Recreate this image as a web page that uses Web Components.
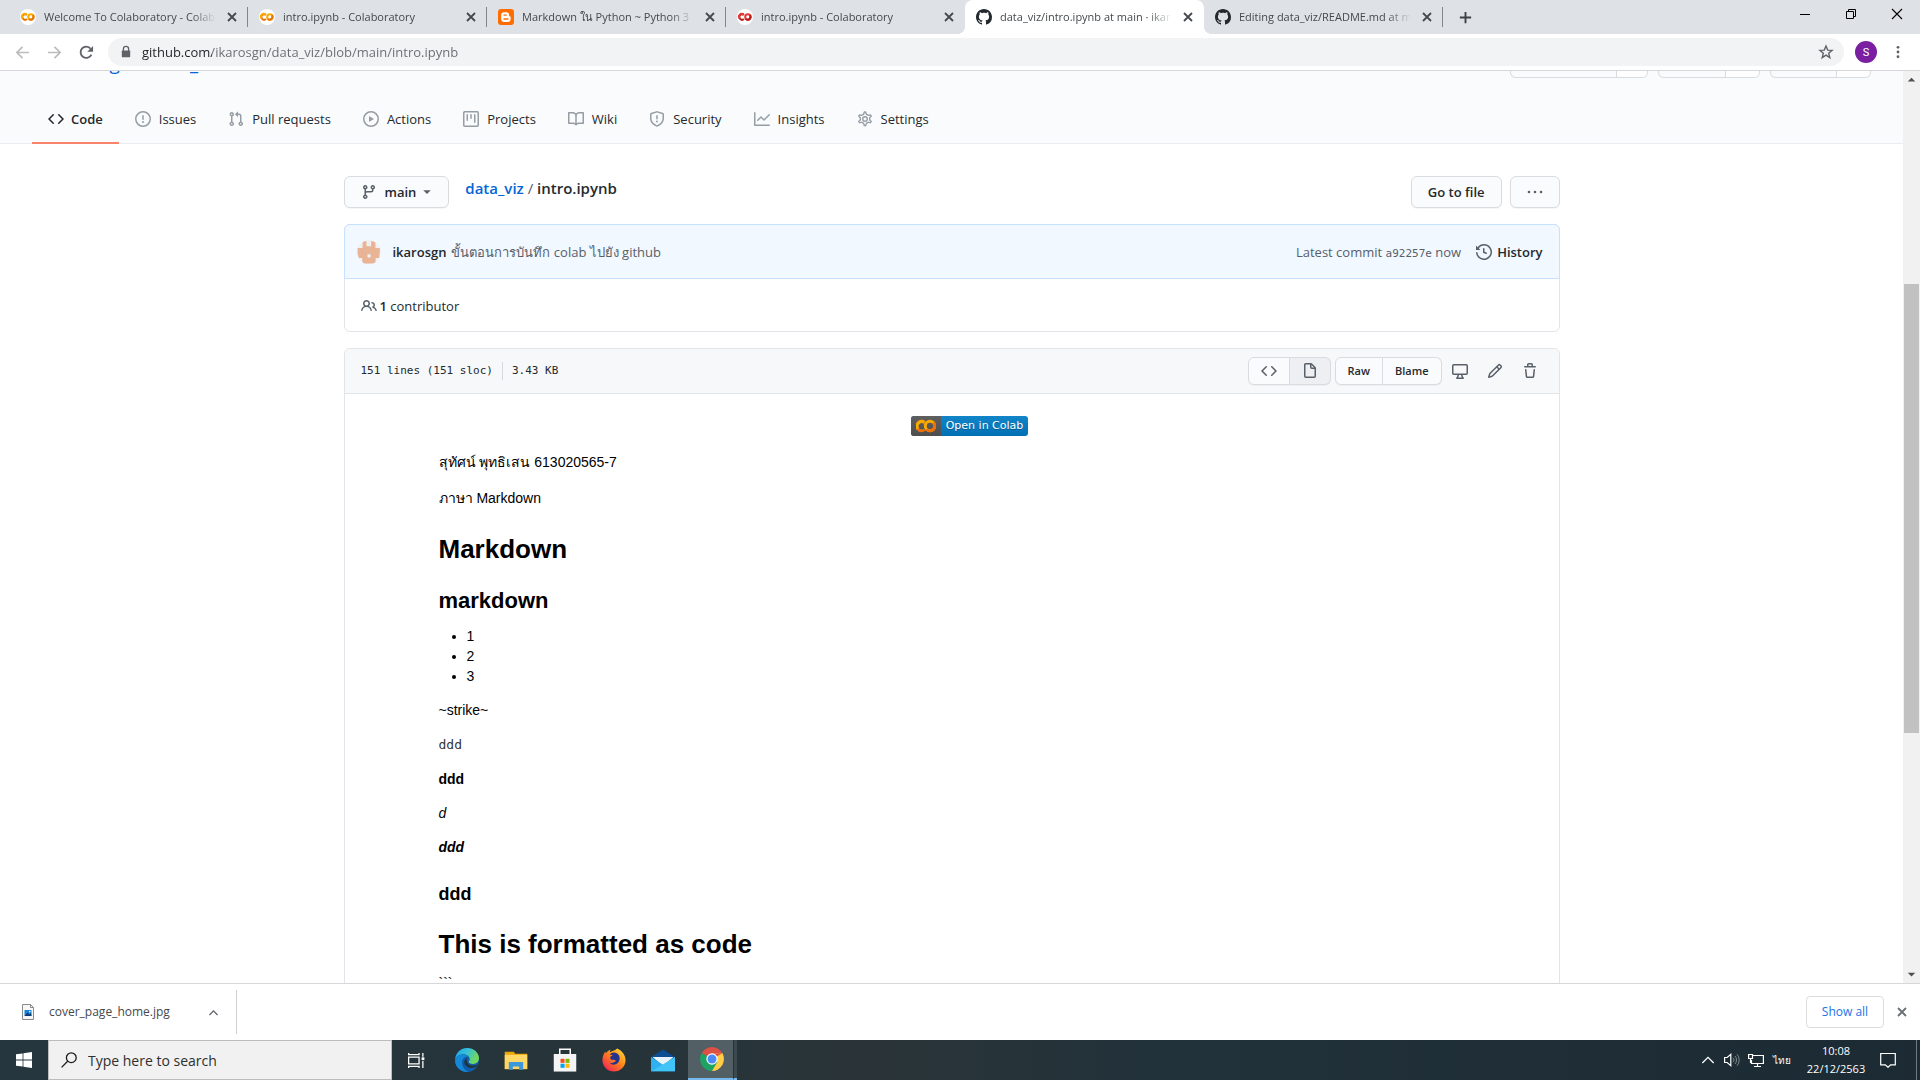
<!DOCTYPE html>
<html lang="en">
<head>
<meta charset="utf-8">
<title>data_viz/intro.ipynb at main · ikarosgn/data_viz</title>
<style>
  html, body { margin: 0; height: 100%; }
  body {
    --ui: "Open Sans", "Noto Sans", sans-serif;
    --mono: "DejaVu Sans Mono", "Liberation Mono", monospace;
    --text: #24292e;
    --muted: #586069;
    --line: #e1e4e8;
    font-family: var(--ui);
    font-size: 13px;
    line-height: 20px;
    color: var(--text);
    background: #fff;
    overflow: hidden;
  }
</style>
</head>
<body>
<desktop-screen></desktop-screen>

<script>
const define = (name, html, setup) => {
  const template = document.createElement('template');
  template.innerHTML = '<style>*{box-sizing:border-box}button{font:inherit;color:inherit;margin:0;padding:0;border:0;background:none;display:inline-flex;align-items:center;justify-content:center}a{color:inherit;text-decoration:none}</style>' + html;
  customElements.define(name, class extends HTMLElement {
    constructor() {
      super();
      this.attachShadow({ mode: 'open' }).append(template.content.cloneNode(true));
    }
    connectedCallback() { if (setup) setup(this, this.shadowRoot); }
  });
};

const COLAB = (a, b) => `<circle cx="8" cy="8" r="8" fill="#fff"/><g fill="none" stroke-width="2"><path d="M6.9 6a2.7 2.7 0 1 0 0 4" stroke="${b}"/><circle cx="10.9" cy="8" r="2.7" stroke="${a}"/><path d="M6.6 5.6a2.7 2.7 0 0 0-3.8 3.9" stroke="${a}"/><path d="M9 9.9A2.7 2.7 0 0 0 12.9 6.2" stroke="${b}"/></g>`;

const ICONS = {
  code: '<path d="M4.72 3.22a.75.75 0 011.06 1.06L2.06 8l3.72 3.72a.75.75 0 11-1.06 1.06L.47 8.53a.75.75 0 010-1.06l4.25-4.25zm6.56 0a.75.75 0 10-1.06 1.06L13.94 8l-3.72 3.72a.75.75 0 101.06 1.06l4.25-4.25a.75.75 0 000-1.06l-4.25-4.25z"/>',
  issue: '<path d="M8 1.5a6.5 6.5 0 100 13 6.5 6.5 0 000-13zM0 8a8 8 0 1116 0A8 8 0 010 8zm9 3a1 1 0 11-2 0 1 1 0 012 0zm-.25-6.25a.75.75 0 00-1.5 0v3.5a.75.75 0 001.5 0v-3.5z"/>',
  pull: '<path d="M7.177 3.073L9.573.677A.25.25 0 0110 .854v4.792a.25.25 0 01-.427.177L7.177 3.427a.25.25 0 010-.354zM3.75 2.5a.75.75 0 100 1.5.75.75 0 000-1.5zm-2.25.75a2.25 2.25 0 113 2.122v5.256a2.251 2.251 0 11-1.5 0V5.372A2.25 2.25 0 011.5 3.25zM11 2.5h-1V4h1a1 1 0 011 1v5.628a2.251 2.251 0 101.5 0V5A2.5 2.5 0 0011 2.5zm1 10.25a.75.75 0 111.5 0 .75.75 0 01-1.5 0zM3.75 12a.75.75 0 100 1.5.75.75 0 000-1.5z"/>',
  play: '<path d="M1.5 8a6.5 6.5 0 1113 0 6.5 6.5 0 01-13 0zM8 0a8 8 0 100 16A8 8 0 008 0zM6.379 5.227A.25.25 0 006 5.442v5.117a.25.25 0 00.379.214l4.264-2.559a.25.25 0 000-.428L6.379 5.227z"/>',
  project: '<path d="M1.75 0A1.75 1.75 0 000 1.75v12.5C0 15.216.784 16 1.75 16h12.5A1.75 1.75 0 0016 14.25V1.75A1.75 1.75 0 0014.25 0H1.75zM1.5 1.75a.25.25 0 01.25-.25h12.5a.25.25 0 01.25.25v12.5a.25.25 0 01-.25.25H1.75a.25.25 0 01-.25-.25V1.75zM11.75 3a.75.75 0 00-.75.75v7.5a.75.75 0 001.5 0v-7.5a.75.75 0 00-.75-.75zm-8.25.75a.75.75 0 011.5 0v5.5a.75.75 0 01-1.5 0v-5.5zM8 3a.75.75 0 00-.75.75v3.5a.75.75 0 001.5 0v-3.5A.75.75 0 008 3z"/>',
  book: '<path d="M0 1.75A.75.75 0 01.75 1h4.253c1.227 0 2.317.59 3 1.501A3.744 3.744 0 0111.006 1h4.245a.75.75 0 01.75.75v10.5a.75.75 0 01-.75.75h-4.507a2.25 2.25 0 00-1.591.659l-.622.621a.75.75 0 01-1.06 0l-.622-.621A2.25 2.25 0 005.258 13H.75a.75.75 0 01-.75-.75V1.75zm8.755 3a2.25 2.25 0 012.25-2.25H14.5v9h-3.757c-.71 0-1.4.201-1.992.572l.004-7.322zm-1.504 7.324l.004-5.073-.002-2.253A2.25 2.25 0 005.003 2.5H1.5v9h3.757a3.75 3.75 0 011.994.574z"/>',
  shield: '<path d="M7.467.133a1.75 1.75 0 011.066 0l5.25 1.68A1.75 1.75 0 0115 3.48V7c0 1.566-.32 3.182-1.303 4.682-.983 1.498-2.585 2.813-5.032 3.855a1.7 1.7 0 01-1.33 0c-2.447-1.042-4.049-2.357-5.032-3.855C1.32 10.182 1 8.566 1 7V3.48a1.75 1.75 0 011.217-1.667l5.25-1.68zm.61 1.429a.25.25 0 00-.153 0l-5.25 1.68a.25.25 0 00-.174.238V7c0 1.358.275 2.666 1.057 3.86.784 1.194 2.121 2.34 4.366 3.297a.2.2 0 00.154 0c2.245-.956 3.582-2.104 4.366-3.298C13.225 9.666 13.5 8.36 13.5 7V3.48a.25.25 0 00-.174-.237l-5.25-1.68zM9 10.5a1 1 0 11-2 0 1 1 0 012 0zm-.25-5.75a.75.75 0 10-1.5 0v3a.75.75 0 001.5 0v-3z"/>',
  graph: '<path d="M1.5 1.75a.75.75 0 00-1.5 0v12.5c0 .414.336.75.75.75h14.5a.75.75 0 000-1.5H1.5V1.75zm14.28 2.53a.75.75 0 00-1.06-1.06L10 7.94 7.53 5.47a.75.75 0 00-1.06 0L3.22 8.72a.75.75 0 001.06 1.06L7 7.06l2.47 2.47a.75.75 0 001.06 0l5.25-5.25z"/>',
  gear: '<g fill="none" stroke="currentColor" stroke-width="1.4"><path d="M7.429.925a6.593 6.593 0 011.142 0c.036.003.108.036.137.146l.389 1.405c.147.56.45.967.897 1.189.174.086.341.183.501.29.417.278.97.423 1.53.27l1.302-.303c.11-.03.175.016.195.046.319.41.51.741.673 1.089.014.031.022.11-.059.19l-1.015.906c-.411.406-.512.857-.48 1.256a4.588 4.588 0 010 .782c-.032.399.069.85.48 1.256l1.015.906c.08.08.073.159.059.19a6.494 6.494 0 01-.673 1.09c-.02.029-.086.074-.195.045l-1.303-.303c-.559-.153-1.112-.008-1.529.27-.16.107-.327.204-.5.29-.449.222-.751.628-.898 1.189l-.389 1.405c-.029.11-.101.143-.137.146a6.613 6.613 0 01-1.142 0c-.036-.003-.108-.037-.137-.146l-.389-1.405c-.147-.56-.45-.967-.897-1.189a4.502 4.502 0 01-.501-.29c-.417-.278-.97-.423-1.53-.27l-1.302.303c-.11.03-.175-.016-.195-.046a6.492 6.492 0 01-.673-1.089c-.014-.031-.022-.11.059-.19l1.015-.906c.411-.406.512-.857.48-1.256a4.587 4.587 0 010-.782c.032-.399-.069-.85-.48-1.256l-1.015-.906c-.08-.08-.073-.159-.059-.19a6.44 6.44 0 01.673-1.09c.02-.029.086-.075.195-.045l1.303.303c.559.153 1.112.008 1.529-.27.16-.107.327-.204.5-.29.449-.222.751-.628.898-1.189l.389-1.405c.029-.11.101-.143.137-.146z"/><circle cx="8" cy="8" r="2.25"/></g>',
  branch: '<path d="M11.75 2.5a.75.75 0 100 1.5.75.75 0 000-1.5zm-2.25.75a2.25 2.25 0 113 2.122V6A2.5 2.5 0 0110 8.5H6a1 1 0 00-1 1v1.128a2.251 2.251 0 11-1.5 0V5.372a2.25 2.25 0 111.5 0v1.836A2.492 2.492 0 016 7h4a1 1 0 001-1v-.628A2.25 2.25 0 019.5 3.25zM4.25 12a.75.75 0 100 1.5.75.75 0 000-1.5zM3.5 3.25a.75.75 0 111.5 0 .75.75 0 01-1.5 0z"/>',
  history: '<path d="M1.643 3.143L.427 1.927A.25.25 0 000 2.104V5.75c0 .138.112.25.25.25h3.646a.25.25 0 00.177-.427L2.715 4.215a6.5 6.5 0 11-1.18 4.458.75.75 0 10-1.493.154 8.001 8.001 0 101.6-5.684zM7.75 4a.75.75 0 01.75.75v2.992l2.028.812a.75.75 0 01-.557 1.392l-2.5-1A.75.75 0 017 8.25v-3.5A.75.75 0 017.75 4z"/>',
  people: '<path d="M5.5 3.5a2 2 0 100 4 2 2 0 000-4zM2 5.5a3.5 3.5 0 115.898 2.549 5.507 5.507 0 013.034 4.084.75.75 0 11-1.482.235 4.001 4.001 0 00-7.9 0 .75.75 0 01-1.482-.236A5.507 5.507 0 013.102 8.05 3.49 3.49 0 012 5.5zM11 4a.75.75 0 100 1.5 1.5 1.5 0 01.666 2.844.75.75 0 00-.416.672v.352a.75.75 0 00.574.73c1.2.289 2.162 1.2 2.522 2.372a.75.75 0 101.434-.44 5.01 5.01 0 00-2.56-3.012A3 3 0 0011 4z"/>',
  file: '<path d="M3.75 1.5a.25.25 0 00-.25.25v11.5c0 .138.112.25.25.25h8.5a.25.25 0 00.25-.25V6H9.75A1.75 1.75 0 018 4.25V1.5H3.75zm5.75.56v2.19c0 .138.112.25.25.25h2.19L9.5 2.06zM2 1.75C2 .784 2.784 0 3.75 0h5.086c.464 0 .909.184 1.237.513l3.414 3.414c.329.328.513.773.513 1.237v8.086A1.75 1.75 0 0112.25 15h-8.5A1.75 1.75 0 012 13.25V1.75z"/>',
  desktop: '<path d="M1.75 2.5h12.5a.25.25 0 01.25.25v7.5a.25.25 0 01-.25.25H1.75a.25.25 0 01-.25-.25v-7.5a.25.25 0 01.25-.25zM14.25 1H1.75A1.75 1.75 0 000 2.75v7.5C0 11.216.784 12 1.75 12h3.727c-.1 1.041-.52 1.872-1.292 2.757A.75.75 0 004.75 16h6.5a.75.75 0 00.565-1.243c-.772-.885-1.193-1.716-1.292-2.757h3.727A1.75 1.75 0 0016 10.25v-7.5A1.75 1.75 0 0014.25 1zM9.018 12H6.982a5.72 5.72 0 01-.765 2.5h3.566a5.72 5.72 0 01-.765-2.5z"/>',
  pencil: '<path d="M11.013 1.427a1.75 1.75 0 012.474 0l1.086 1.086a1.75 1.75 0 010 2.474l-8.61 8.61c-.21.21-.47.364-.756.445l-3.251.93a.75.75 0 01-.927-.928l.929-3.25a1.75 1.75 0 01.445-.758l8.61-8.61zm1.414 1.06a.25.25 0 00-.354 0L10.811 3.75l1.439 1.44 1.263-1.263a.25.25 0 000-.354l-1.086-1.086zM11.189 6.25L9.75 4.81l-6.286 6.287a.25.25 0 00-.064.108l-.558 1.953 1.953-.558a.249.249 0 00.108-.064l6.286-6.286z"/>',
  trash: '<path d="M6.5 1.75a.25.25 0 01.25-.25h2.5a.25.25 0 01.25.25V3h-3V1.75zm4.5 0V3h2.25a.75.75 0 010 1.5H2.75a.75.75 0 010-1.5H5V1.75C5 .784 5.784 0 6.75 0h2.5C10.216 0 11 .784 11 1.75zM4.496 6.675a.75.75 0 10-1.492.15l.66 6.6A1.75 1.75 0 005.405 15h5.19c.9 0 1.652-.681 1.741-1.576l.66-6.6a.75.75 0 00-1.492-.149l-.66 6.6a.25.25 0 01-.249.225h-5.19a.25.25 0 01-.249-.225l-.66-6.6z"/>',
  github: '<path d="M8 0C3.58 0 0 3.58 0 8c0 3.54 2.29 6.53 5.47 7.59.4.07.55-.17.55-.38 0-.19-.01-.82-.01-1.49-2.01.37-2.53-.49-2.69-.94-.09-.23-.48-.94-.82-1.13-.28-.15-.68-.52-.01-.53.63-.01 1.08.58 1.23.82.72 1.21 1.87.87 2.33.66.07-.52.28-.87.51-1.07-1.78-.2-3.64-.89-3.64-3.95 0-.87.31-1.59.82-2.15-.08-.2-.36-1.02.08-2.12 0 0 .67-.21 2.2.82.64-.18 1.32-.27 2-.27.68 0 1.36.09 2 .27 1.53-1.04 2.2-.82 2.2-.82.44 1.1.16 1.92.08 2.12.51.56.82 1.27.82 2.15 0 3.07-1.87 3.75-3.65 3.95.29.25.54.73.54 1.48 0 1.07-.01 1.93-.01 2.2 0 .21.15.46.55.38A8.013 8.013 0 0016 8c0-4.42-3.58-8-8-8z"/>',
  dots: '<circle cx="2" cy="8" r="1.3"/><circle cx="8" cy="8" r="1.3"/><circle cx="14" cy="8" r="1.3"/>',
  caret: '<path d="M2 5h12l-6 6z"/>',
  colab: COLAB('#f9ab00', '#e8710a'),
  colabred: COLAB('#e53935', '#b71c1c'),
  blogger: '<rect width="16" height="16" rx="3" fill="#ff6d00"/><path d="M5.8 3.2h2.6c1.7 0 2.7 1.2 2.7 2.6v.8c0 .4.3.6.6.6.6 0 .9.3.9.8v2.3c0 1.5-1.2 2.7-2.7 2.7H6c-1.6 0-2.8-1.2-2.8-2.7V5.9c0-1.5 1.1-2.7 2.6-2.7z" fill="#fff"/><path d="M6 6.1h2.3M6 10h4" stroke="#ff6d00" stroke-width="1.3" stroke-linecap="round"/>',
  close: '<path d="M4 4l8 8M12 4l-8 8" stroke="currentColor" stroke-width="1.8" fill="none"/>',
  plus: '<path d="M8 2v12M2 8h12" stroke="currentColor" stroke-width="2" fill="none"/>',
  back: '<path d="M15 8H2M8 2L2 8l6 6" stroke="currentColor" stroke-width="1.8" fill="none"/>',
  forward: '<path d="M1 8h13M8 2l6 6-6 6" stroke="currentColor" stroke-width="1.8" fill="none"/>',
  reload: '<path d="M13.2 10.2A6 6 0 1 1 12.4 4" stroke="currentColor" stroke-width="2" fill="none"/><path d="M15 1v6.2H8.8z"/>',
  lock: '<path d="M5 7V4.600a3 3 0 0 1 6 0V7" stroke="currentColor" stroke-width="1.500" fill="none"/><rect x="3.200" y="6.200" width="9.600" height="7.800" rx="1"/>',
  star: '<path d="M8 2l1.7 4.1 4.4.3-3.4 2.9 1.1 4.3L8 11.2l-3.8 2.4 1.1-4.3-3.4-2.9 4.4-.3z" stroke="currentColor" stroke-width="1.4" fill="none"/>',
  menu: '<circle cx="8" cy="2.6" r="1.6"/><circle cx="8" cy="8" r="1.6"/><circle cx="8" cy="13.4" r="1.6"/>',
  minimize: '<path d="M3 8.5h10" stroke="currentColor" fill="none"/>',
  restore: '<path d="M3.5 5.5h7v7h-7zM5.5 5V3.5h7v7H11" stroke="currentColor" fill="none"/>',
  exit: '<path d="M3 3l10 10M13 3L3 13" stroke="currentColor" stroke-width="1.1" fill="none"/>',
  up: '<path d="M4 10l4-4 4 4z"/>',
  down: '<path d="M4 6l4 4 4-4z"/>',
  chevron: '<path d="M3 11l5-5 5 5" stroke="currentColor" stroke-width="1.6" fill="none"/>',
  hidden: '<path d="M1.500 11.500L8 5l6.500 6.500" stroke="currentColor" stroke-width="1.500" fill="none"/>',
  avatar: '<circle cx="8" cy="8" r="8" fill="#f0f0f0"/><path fill="#e9b496" d="M3.7 1.7L5 .8h1.3v3.3h3.1V.8h1.4l1.5 1v3.6h2.9v2.5L14.8 12h-2.4v2.6l-1.5 1H4.900l-1.400-1V12H1.200L.4 9V5.400h3.300zM7 9.500v2.200h2.100V9.500z"/>',
  image: '<path d="M2.500.5h8l3 3v12h-11z" fill="#f7f7f7" stroke="#8a8a8a"/><path d="M10.500.5v3h3" fill="none" stroke="#8a8a8a"/><rect x="4.500" y="6" width="7" height="6" fill="#1b82d8"/><path d="M4.500 12l3-3.500 2 2L11 9l.5 3z" fill="#0b3f74"/><circle cx="9.800" cy="7.600" r=".8" fill="#fff"/>',
  windows: '<path d="M0 2.300l6.600-.9v6.100H0zM7.400 1.300L16 0v7.500H7.400zM0 8.400h6.600v6.200L0 13.700zM7.400 8.400H16V16l-8.600-1.200z"/>',
  search: '<g stroke="currentColor" stroke-width="1.3" fill="none"><circle cx="10.300" cy="5.700" r="4.900"/><path d="M6.600 9.200L.6 15.400"/></g>',
  taskview: '<path d="M.6 1v1.500h9.800V1M.6 15v-1.500h9.800V15M.6 4.900h9.800v6.200H.6zM14 1v3.400M14 15V8.500" stroke="currentColor" stroke-width="1.200" fill="none"/><path d="M12.800 5h2.600v2.600h-2.600z"/>',
  edge: '<defs><linearGradient id="e1" x1="0" y1="0" x2="1" y2=".4"><stop offset="0" stop-color="#1f9de0"/><stop offset=".5" stop-color="#35c1d8"/><stop offset="1" stop-color="#72d75c"/></linearGradient></defs><circle cx="8" cy="8" r="8" fill="#0f5ead"/><path d="M.1 7.500C.6 3 4 0 8 0c4.600 0 8 3.300 8 6.700 0 2.400-1.700 3.900-4 3.900-1.700 0-2.900-.5-2.900-1.200 0-.5.7-.6.7-1.900C9.800 5.700 8 4.200 5.600 4.200 3 4.200.9 5.700.1 7.500z" fill="url(#e1)"/><path d="M.1 7.600C1 5.500 3 4.300 5.500 4.300c1.500 0 3 .5 3.700 1.500-2.600-.4-4.500 1.500-4.500 4 0 3 2 5.300 4.400 6.100C4 16.500-.4 12.500.1 7.600z" fill="#1588d8"/><path d="M14.600 12.400c-1 .6-2.400.9-3.700.9-3 0-4.700-1.800-4.700-3.900 0-1.300.7-2.200 1.700-2.800-.7 2.500 1 5.100 4 5.100 1.300 0 2.400-.4 3.200-.7z" fill="#24343b"/>',
  folder: '<path d="M.5 2.500h6l1 1.300h8v10.400H.5z" fill="#e9a800"/><path d="M.5 4.500h15V14H.5z" fill="#ffd767"/><path d="M3.200 14.500V9.300h9.600v5.200h-2.700v-2.200H5.900v2.200z" fill="#3b98db"/>',
  store: '<path d="M4.500 5V.8h7V5" stroke="#fff" fill="none"/><path d="M.5 4h15v11.700H.5z" fill="#f4f4f4"/><path d="M5 7.200h2.700v2.700H5z" fill="#f25022"/><path d="M8.300 7.200H11v2.700H8.300z" fill="#7fba00"/><path d="M5 10.500h2.700v2.700H5z" fill="#00a4ef"/><path d="M8.300 10.500H11v2.700H8.300z" fill="#ffb900"/>',
  firefox: '<defs><linearGradient id="f1" x1="1" y1="0" x2=".1" y2="1"><stop offset="0" stop-color="#ffe843"/><stop offset=".45" stop-color="#ff8a16"/><stop offset="1" stop-color="#f0195c"/></linearGradient></defs><path d="M10 .3c3 1.300 5.700 4 5.700 7.900 0 4.200-3.400 7.500-7.700 7.500S.3 12.400.3 8c0-2.300.8-4.300 2-5.700l.3 1.200C3.500 2.200 4.500 1.500 5.600 1l-.3 1.800C7 1.500 9 1.700 10 .3z" fill="url(#f1)"/><path d="M5.200 4.500c1.500-2.400 5.300-1.800 6.300.9.900 2.500-.6 5.700-3.500 5.700-1.400 0-2.300-.6-2.700-1.200 1.700.4 2.600-.7 3.700-.8.300-.8-.5-1.300-1.500-1.200-1.500.2-2.500-.7-1.800-2 .3-.5 1.200-.8 1.500-1.200z" fill="#25338e"/>',
  mail: '<path d="M0 6l8-5 8 5v9H0z" fill="#0c4d94"/><path d="M1 6h14l-7 6z" fill="#e9f3fb"/><path d="M0 6l8 5.200L16 6v9.500H0z" fill="#2fb1f0"/><path d="M0 15.500L8 11l8-5v9.500z" fill="#41c4f7"/>',
  chrome: '<path d="M8 8L1.100 4A8 8 0 0 1 14.900 4z" fill="#dd5144"/><path d="M8 8L1.100 4A8 8 0 0 0 8 16l3.500-6z" fill="#1da462"/><path d="M8 4h6.900A8 8 0 0 1 8 16l3.500-6z" fill="#ffcd46"/><path d="M8 4.100h7L8 8z" fill="#dd5144"/><circle cx="8" cy="8" r="3.800" fill="#fff"/><circle cx="8" cy="8" r="3" fill="#4c8bf5"/>',
  speaker: '<path d="M.6 5.500h2.600l3.600-3.200v11.400L3.200 10.500H.6z" stroke="currentColor" stroke-width="1.200" fill="none"/><g stroke="#7e888d" fill="none"><path d="M9 5.800a3 3 0 0 1 0 4.400M11 4a6 6 0 0 1 0 8M13 2.300a8.500 8.500 0 0 1 0 11.400"/></g>',
  network: '<path d="M5 3.500h10.400v8H3.500V8M9.500 11.500v3M6 14.500h7M.6 2.500h3.900v4H.6zM2.500 6.500v4.500" stroke="currentColor" stroke-width="1.200" fill="none"/>',
  notice: '<path d="M.7 1.500h14.600v11.300h-4.600L8 15.300l-2.700-2.500H.7z" stroke="currentColor" stroke-width="1.200" fill="none"/>'
};

define('ui-icon', `<style>
  :host { display: inline-flex; flex: none; width: var(--size, 16px); height: var(--size, 16px); }
  svg { width: 100%; height: 100%; fill: currentColor; fill-rule: evenodd; }
</style><svg viewBox="0 0 16 16" aria-hidden="true"></svg>`, (host, root) => {
  root.querySelector('svg').innerHTML = ICONS[host.getAttribute('name')] || '';
});

/* ---------- browser chrome ---------- */

define('browser-tab', `<style>
  :host { display: flex; align-items: center; gap: 8px; position: relative; flex: 0 1 239px; min-width: 0; height: 34px; padding: 0 8px 0 11px; font-size: 11px; color: #45494d; }
  :host::after { content: ""; position: absolute; right: 0; top: 7px; width: 1px; height: 20px; background: #80868b; }
  :host([active])::after, :host([plain])::after { display: none; }
  :host([active]) { background: #fff; border-radius: 8px 8px 0 0; }
  :host([active])::before { content: ""; position: absolute; left: -8px; right: -8px; bottom: 0; height: 8px;
    background: radial-gradient(circle at 0 0, transparent 8px, #fff 8px) left / 8px 8px no-repeat, radial-gradient(circle at 100% 0, transparent 8px, #fff 8px) right / 8px 8px no-repeat; }
  a { flex: 1; min-width: 0; overflow: hidden; white-space: nowrap; line-height: 28px; -webkit-mask-image: linear-gradient(90deg, #000 calc(100% - 24px), transparent); }
  ui-icon.fav { color: #24292e; }
</style><ui-icon class="fav"></ui-icon><a href="#"><slot></slot></a><button aria-label="Close tab"><ui-icon name="close"></ui-icon></button>`, (host, root) => {
  const icon = document.createElement('ui-icon');
  icon.className = 'fav';
  icon.setAttribute('name', host.getAttribute('icon'));
  root.querySelector('.fav').replaceWith(icon);
});

define('tab-strip', `<style>
  :host { display: flex; height: 34px; padding-left: 9px; background: #dee1e6; }
  .new { width: 44px; color: #3c4043; --size: 15px; }
  .win { margin-left: auto; display: flex; height: 28px; color: #000; }
  .win button { width: 46px; }
</style>
<browser-tab icon="colab">Welcome To Colaboratory - Colab</browser-tab>
<browser-tab icon="colab">intro.ipynb - Colaboratory</browser-tab>
<browser-tab icon="blogger">Markdown ใน Python ~ Python 3</browser-tab>
<browser-tab icon="colabred" plain>intro.ipynb - Colaboratory</browser-tab>
<browser-tab icon="github" active>data_viz/intro.ipynb at main · ikar</browser-tab>
<browser-tab icon="github">Editing data_viz/README.md at m</browser-tab>
<button class="new" aria-label="New tab"><ui-icon name="plus"></ui-icon></button>
<div class="win"><button aria-label="Minimize"><ui-icon name="minimize"></ui-icon></button><button aria-label="Restore"><ui-icon name="restore"></ui-icon></button><button aria-label="Close"><ui-icon name="exit"></ui-icon></button></div>`);

define('address-bar', `<style>
  :host { display: flex; align-items: center; height: 37px; padding: 0 6px; border-bottom: 1px solid #d5d7da; background: #fff; color: #5f6368; }
  .nav { width: 32px; --size: 15px; }
  .off { color: #babcbe; }
  .box { flex: 1; display: flex; align-items: center; gap: 9px; height: 28px; margin: 0 11px 0 6px; padding: 0 10px 0 11px; border-radius: 14px; background: #f1f3f4; }
  .box ui-icon { --size: 14px; }
  .box button ui-icon { --size: 16px; }
  input { flex: 1; min-width: 0; height: 24px; padding: 0; border: 0; outline: 0; font: 13px var(--ui); color: transparent; background: linear-gradient(90deg, #202124 70px, #686c70 70px); -webkit-background-clip: text; background-clip: text; }
  .me { width: 22px; height: 22px; border-radius: 50%; background: #7b1fa2; color: #fff; font: 11px Roboto, sans-serif; }
  .menu { width: 32px; margin-left: 5px; --size: 14px; }
</style>
<button class="nav off" aria-label="Back"><ui-icon name="back"></ui-icon></button>
<button class="nav off" aria-label="Forward"><ui-icon name="forward"></ui-icon></button>
<button class="nav" aria-label="Reload"><ui-icon name="reload"></ui-icon></button>
<div class="box"><ui-icon name="lock"></ui-icon><input aria-label="Address" value="github.com/ikarosgn/data_viz/blob/main/intro.ipynb"><button aria-label="Bookmark"><ui-icon name="star"></ui-icon></button></div>
<button class="me" aria-label="Profile">S</button>
<button class="menu" aria-label="Menu"><ui-icon name="menu"></ui-icon></button>`);

define('scroll-bar', `<style>
  :host { display: flex; flex-direction: column; flex: none; width: 17px; background: #f1f1f1; color: #505050; }
  button { height: 17px; --size: 15px; }
  .thumb { flex: 449; margin: 0 1px; background: #c1c1c1; }
  .before { flex: 196; } .after { flex: 233; }
</style><button aria-label="Scroll up"><ui-icon name="up"></ui-icon></button><div class="before"></div><div class="thumb"></div><div class="after"></div><button aria-label="Scroll down"><ui-icon name="down"></ui-icon></button>`);

/* ---------- repository page ---------- */

define('repo-tab', `<style>
  :host { display: flex; }
  a { display: flex; align-items: center; gap: 8px; height: 49px; padding: 0 16px; border-bottom: 2px solid transparent; }
  :host([selected]) a { gap: 7px; border-color: #f9826c; font-weight: 600; }
</style><a href="#"><slot name="icon"></slot><slot></slot></a>`);

define('count-button', `<style>
  :host { display: flex; height: 28px; width: var(--w); border: 1px solid #d9dcdf; border-radius: 6px; overflow: hidden; background: #fafbfc; box-shadow: 0 1px 0 rgba(27,31,35,.04); }
  .main { flex: 1; } .count { width: var(--c, 34px); background: #fff; border-left: 1px solid #d9dcdf; }
</style><button class="main"></button><button class="count"></button>`, (host, root) => {
  root.querySelector('.main').ariaLabel = host.getAttribute('label');
  root.querySelector('.count').ariaLabel = host.getAttribute('label') + ' count';
});

define('repo-header', `<style>
  :host { display: block; background: #fafbfc; border-bottom: 1px solid #eaecef; }
  .top { display: flex; align-items: flex-end; justify-content: space-between; height: 7px; padding: 0 32px 0 56px; font-size: 19px; line-height: 30px; color: #0366d6; }
  .top span { color: var(--muted); margin: 0 5px; }
  .top b { font-weight: 600; }
  .acts { display: flex; gap: 10px; }
  .clip { overflow: hidden; }
  nav { display: flex; padding: 0 32px; margin: 17px 0 -1px; }
  nav ui-icon { color: #959da5; }
  nav ui-icon.on { color: inherit; }
</style>
<div class="clip"><div class="top"><div><a href="#">ikarosgn</a><span>/</span><a href="#"><b>data_viz</b></a></div>
<div class="acts"><count-button label="Unwatch" style="--w:138px;--c:31px"></count-button><count-button label="Star" style="--w:102px"></count-button><count-button label="Fork" style="--w:101px"></count-button></div></div></div>
<nav>
<repo-tab selected><ui-icon slot="icon" name="code" class="on"></ui-icon>Code</repo-tab>
<repo-tab><ui-icon slot="icon" name="issue"></ui-icon>Issues</repo-tab>
<repo-tab><ui-icon slot="icon" name="pull"></ui-icon>Pull requests</repo-tab>
<repo-tab><ui-icon slot="icon" name="play"></ui-icon>Actions</repo-tab>
<repo-tab><ui-icon slot="icon" name="project"></ui-icon>Projects</repo-tab>
<repo-tab><ui-icon slot="icon" name="book"></ui-icon>Wiki</repo-tab>
<repo-tab><ui-icon slot="icon" name="shield"></ui-icon>Security</repo-tab>
<repo-tab><ui-icon slot="icon" name="graph"></ui-icon>Insights</repo-tab>
<repo-tab><ui-icon slot="icon" name="gear"></ui-icon>Settings</repo-tab>
</nav>`);

define('gh-button', `<style>
  :host { display: inline-flex; }
  button { gap: 8px; height: 32px; padding: 0 16px; border: 1px solid #d9dcdf; border-radius: 6px; background: #fafbfc; font-weight: 600; box-shadow: 0 1px 0 rgba(27,31,35,.04); }
  :host([small]) button { height: 28px; padding: 0 12px; font-size: 11px; }
  :host([first]) button { border-radius: 6px 0 0 6px; }
  :host([last]) button { border-radius: 0 6px 6px 0; border-left: 0; }
  :host([pressed]) button { background: #edeff2; }
</style><button><slot></slot></button>`);

define('commit-box', `<style>
  :host { display: block; border: 1px solid var(--line); border-radius: 6px; margin-top: 16px; }
  .row { display: flex; align-items: center; }
  .commit { margin: -1px; height: 55px; padding: 0 16px 0 12px; background: #f1f8ff; border: 1px solid #c8e1ff; border-radius: 6px 6px 0 0; color: var(--muted); }
  .commit > ui-icon { --size: 24px; margin-right: 12px; }
  .name { font-weight: 600; color: var(--text); margin-right: 5px; }
  .when { margin-left: auto; }
  .sha { font: 11px var(--mono); }
  .hist { display: flex; align-items: center; gap: 5px; margin-left: 15px; font-weight: 600; color: var(--text); }
  .hist ui-icon { color: var(--muted); }
  .who { height: 53px; padding: 2px 16px 0; gap: 3px; }
  .who ui-icon { color: var(--muted); }
  b { font-weight: 600; }
</style>
<div class="row commit"><ui-icon name="avatar"></ui-icon><a class="name" href="#">ikarosgn</a><a href="#">ขั้นตอนการบันทึก colab ไปยัง github</a>
<span class="when">Latest commit <a class="sha" href="#">a92257e</a> now</span><a class="hist" href="#"><ui-icon name="history"></ui-icon>History</a></div>
<div class="row who"><ui-icon name="people"></ui-icon><span><b>1</b> contributor</span></div>`);

define('colab-badge', `<style>
  :host { display: inline-flex; }
  a { display: flex; align-items: center; width: 117px; height: 20px; border-radius: 3px; overflow: hidden; color: #fff; font: 11px/20px "DejaVu Sans", sans-serif; text-shadow: 0 1px #01010144; background: linear-gradient(#1285c9, #0070b4); }
  .l { width: 30px; height: 20px; padding: 3px 5px; background: linear-gradient(#5f5f5f, #4e4e4e); }
  svg { width: 20px; height: 14px; display: block; }
  .r { flex: 1; text-align: center; white-space: nowrap; }
</style><a href="#"><span class="l"><svg viewBox="0 0 20 14" fill="none" stroke-width="3"><path d="M8.500 3.400a4.700 4.700 0 1 0 0 7.200" stroke="#e8710a"/><path d="M8.500 3.400a4.700 4.700 0 0 0-6.700 6.300" stroke="#f9ab00"/><circle cx="14" cy="7" r="4.700" stroke="#f9ab00"/><path d="M10.600 10.300a4.700 4.700 0 0 0 6.700-6.600" stroke="#e8710a"/></svg></span><span class="r">Open in Colab</span></a>`);

define('notebook-view', `<style>
  :host { display: block; padding: 22px 58px 0 94px; font-family: "Liberation Sans", Arial, sans-serif; font-size: 14px; line-height: 20px; color: #000; }
  .badge { display: flex; justify-content: center; margin-bottom: 15px; }
  p, h1, h2, h3, ul { margin: 0 0 14px; }
  p:lang(th) { line-height: 22px; }
  h1 { font-size: 26px; line-height: 30px; margin: 25px 0 24px; }
  h2 { font-size: 22px; line-height: 26px; margin: 0 0 12px; }
  h3 { font-size: 18px; line-height: 22px; margin: 26px 0 24px; }
  h3 + h1 { margin: 0 0 14px; }
  ul { padding-left: 28px; }
  code { font: 13px/20px var(--mono); color: #333; }
</style>
<div class="badge"><colab-badge></colab-badge></div>
<p lang="th">สุทัศน์ พุทธิเสน 613020565-7</p>
<p lang="th">ภาษา Markdown</p>
<h1>Markdown</h1>
<h2>markdown</h2>
<ul><li>1</li><li>2</li><li>3</li></ul>
<p>~strike~</p>
<p><code>ddd</code></p>
<p><strong>ddd</strong></p>
<p><em>d</em></p>
<p><strong><em>ddd</em></strong></p>
<h3>ddd</h3>
<h1>This is formatted as code</h1>
<p>\`\`\`</p>`);

define('file-box', `<style>
  :host { display: block; border: 1px solid var(--line); border-radius: 6px; margin-top: 16px; }
  header { display: flex; align-items: center; height: 45px; padding: 0 16px; background: #f6f8fa; border-bottom: 1px solid var(--line); border-radius: 6px 6px 0 0; }
  .info { display: flex; align-items: center; font: 11px/18px var(--mono); }
  .info i { width: 1px; height: 18px; margin: 0 9px; background: #d5d9de; }
  .tools { margin-left: auto; display: flex; align-items: center; color: var(--muted); }
  .group { display: flex; margin-right: 4px; color: var(--text); }
  .group + .group { margin-right: 1px; }
  .group ui-icon { color: var(--muted); }
  .tool { width: 35px; height: 28px; --size: 16px; }
  .tools > .tool:last-child { margin-right: -5px; }
</style>
<header><div class="info"><span>151 lines (151 sloc)</span><i></i><span>3.43 KB</span></div>
<div class="tools"><div class="group"><gh-button small first><ui-icon name="code"></ui-icon></gh-button><gh-button small last pressed><ui-icon name="file"></ui-icon></gh-button></div>
<div class="group"><gh-button small first>Raw</gh-button><gh-button small last>Blame</gh-button></div>
<button class="tool" aria-label="Open in desktop"><ui-icon name="desktop"></ui-icon></button><button class="tool" aria-label="Edit"><ui-icon name="pencil"></ui-icon></button><button class="tool" aria-label="Delete"><ui-icon name="trash"></ui-icon></button></div></header>
<notebook-view></notebook-view>`);

define('repo-page', `<style>
  :host { display: block; flex: 1; min-width: 0; overflow: hidden; }
  main { max-width: 1280px; margin: 0 auto; padding: 32px 32px 0; }
  .bar { display: flex; align-items: center; gap: 8px; }
  .path { flex: 1; align-self: flex-start; margin-left: 8px; font-size: 15px; line-height: 24px; color: var(--muted); }
  .path a { color: #0366d6; } .path b, .path a { font-weight: 600; } .path b { color: var(--text); }
  ui-icon { color: var(--muted); }
  .caret { --size: 10px; margin-left: -2px; }
</style>
<repo-header></repo-header>
<main>
<div class="bar"><gh-button><ui-icon name="branch"></ui-icon>main<ui-icon class="caret" name="caret"></ui-icon></gh-button><div class="path"><a href="#">data_viz</a> / <b>intro.ipynb</b></div><gh-button>Go to file</gh-button><gh-button><ui-icon name="dots"></ui-icon></gh-button></div>
<commit-box></commit-box>
<file-box></file-box>
</main>`);

/* ---------- bottom bars ---------- */

define('download-shelf', `<style>
  :host { display: flex; align-items: center; height: 57px; border-top: 1px solid #d5d7da; background: #fff; color: #45494d; }
  .item { display: flex; align-items: center; height: 44px; width: 237px; padding: 0 16px 0 20px; border-right: 1px solid #cfd1d4; }
  .item a { flex: 1; margin-left: 13px; font-size: 12px; }
  .item button { --size: 13px; color: #5f6368; }
  .all { margin-left: auto; width: 78px; height: 32px; border: 1px solid #dadce0; border-radius: 4px; color: #1a73e8; font-size: 12px; }
  .x { width: 36px; color: #6b6f73; }
</style>
<div class="item"><ui-icon name="image"></ui-icon><a href="#">cover_page_home.jpg</a><button aria-label="Options"><ui-icon name="chevron"></ui-icon></button></div>
<button class="all">Show all</button><button class="x" aria-label="Close downloads"><ui-icon name="close"></ui-icon></button>`);

define('task-bar', `<style>
  :host { display: flex; align-items: stretch; height: 40px; background: linear-gradient(90deg, #25363e, #263439 35%, #2a3438 45%, #22323a 60%, #1c2b33); color: #fff; }
  .start { width: 48px; }
  .find { display: flex; align-items: center; gap: 11px; width: 344px; padding: 0 12px; background: #f1f1f1; border: 1px solid #bcbcbc; color: #1c1c1c; }
  input { flex: 1; min-width: 0; border: 0; padding: 0; outline: 0; background: none; font: 14px var(--ui); }
  input::placeholder { color: #2f2f2f; }
  .apps { display: flex; }
  .apps button { width: 49px; --size: 24px; }
  .apps .view { width: 50px; padding-right: 2px; --size: 17px; }
  .apps .on { width: 45px; margin-left: 1px; padding-left: 3px; background: #526066; border-bottom: 2px solid #76b9ed; }
  .apps .more { width: 4px; background: #3c4a50; border-left: 1px solid #263439; border-bottom: 2px solid #76b9ed; }
  .tray { display: flex; margin-left: auto; align-items: center; font-size: 12px; }
  .tray button { width: 24px; height: 40px; --size: 16px; }
  .tray .up { --size: 14px; }
  .tray .lang { width: 28px; font-size: 10px; }
  .tray .clock { width: 80px; flex-direction: column; font-size: 11px; line-height: 18px; }
  .tray .note { width: 24px; margin: 0 17px 0 0; }
  .tray .edge { width: 4px; border-left: 1px solid #6f7a80; margin-left: -1px; }
</style>
<button class="start" aria-label="Start"><ui-icon name="windows"></ui-icon></button>
<label class="find"><ui-icon name="search"></ui-icon><input aria-label="Search" placeholder="Type here to search"></label>
<div class="apps"><button class="view" aria-label="Task view"><ui-icon name="taskview"></ui-icon></button><button aria-label="Edge"><ui-icon name="edge"></ui-icon></button><button aria-label="Explorer"><ui-icon name="folder"></ui-icon></button><button aria-label="Store"><ui-icon name="store"></ui-icon></button><button aria-label="Firefox"><ui-icon name="firefox"></ui-icon></button><button aria-label="Mail"><ui-icon name="mail"></ui-icon></button><button class="on" aria-label="Chrome"><ui-icon name="chrome"></ui-icon></button><button class="more" aria-label="More windows"></button></div>
<div class="tray"><button class="up" aria-label="Hidden icons"><ui-icon name="hidden"></ui-icon></button><button aria-label="Volume"><ui-icon name="speaker"></ui-icon></button><button aria-label="Network"><ui-icon name="network"></ui-icon></button><button class="lang">ไทย</button><button class="clock"><span>10:08</span><span>22/12/2563</span></button><button class="note" aria-label="Notifications"><ui-icon name="notice"></ui-icon></button><button class="edge" aria-label="Show desktop"></button></div>`);

define('desktop-screen', `<style>
  :host { display: flex; flex-direction: column; height: 100vh; }
  .view { display: flex; flex: 1; min-height: 0; }
</style>
<tab-strip></tab-strip><address-bar></address-bar>
<div class="view"><repo-page></repo-page><scroll-bar></scroll-bar></div>
<download-shelf></download-shelf><task-bar></task-bar>`);
</script>
</body>
</html>
